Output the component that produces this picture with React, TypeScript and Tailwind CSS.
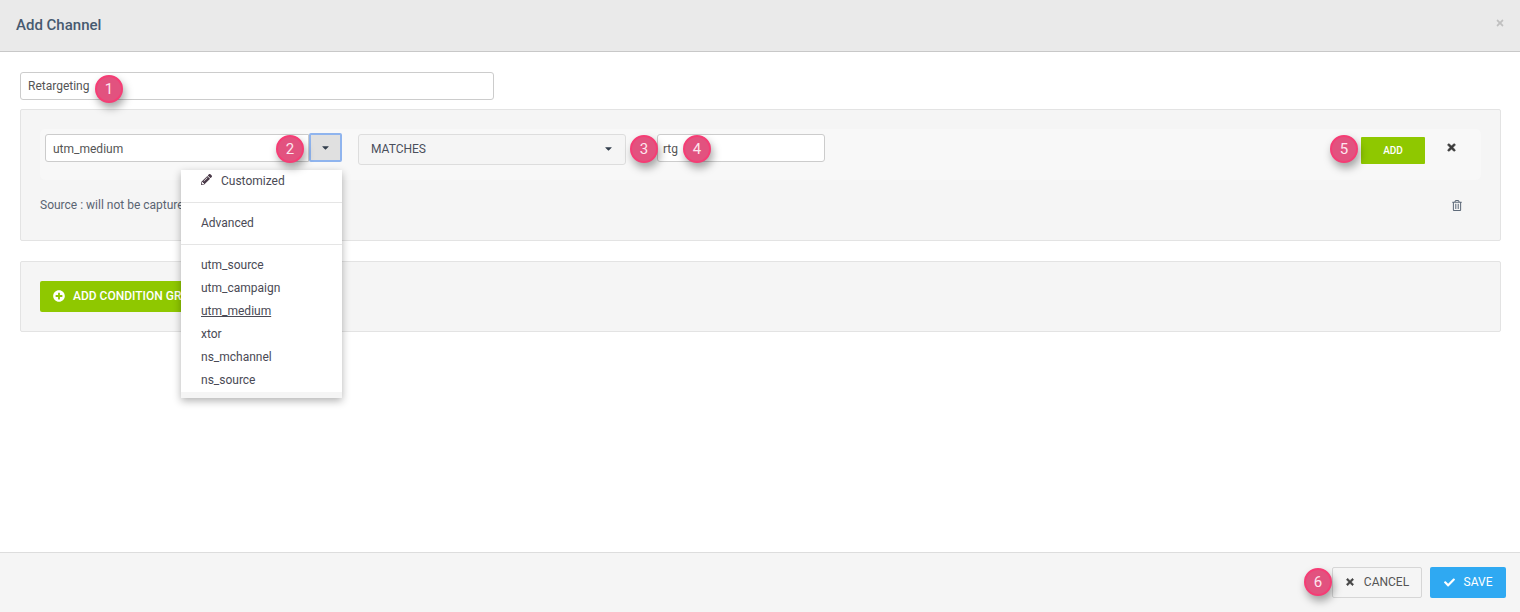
import React from "react";
import { FaCaretDown, FaCheck, FaPencilAlt, FaPlusCircle, FaRegTrashAlt, FaTimes } from "react-icons/fa";

const badges = [
  { n: 1, className: "left-[95px] top-[75px]" },
  { n: 2, className: "left-[276px] top-[135px]" },
  { n: 3, className: "left-[630px] top-[135px]" },
  { n: 4, className: "left-[683px] top-[135px]" },
  { n: 5, className: "left-[1330px] top-[135px]" },
  { n: 6, className: "left-[1304px] top-[568px]" },
];

const sources = ["utm_source", "utm_campaign", "utm_medium", "xtor", "ns_mchannel", "ns_source"];

const Badge: React.FC<{ n: number; className: string }> = ({ n, className }) => (
  <span
    className={`absolute ${className} z-20 flex h-[28px] w-[28px] items-center justify-center rounded-full border-2 border-[#f53d75] bg-[#e2527f] text-[15px] text-[#fde6ee] shadow-[2px_5px_8px_rgba(0,0,0,0.35)]`}>
    {n}
  </span>
);

const Dropdown = () => (
  <div className="absolute left-[181px] top-[170px] z-10 h-[228px] w-[161px] bg-white text-[12px] text-[#4a4a55] shadow-[0_3px_8px_rgba(0,0,0,0.3)]">
    <div className="flex h-[32px] items-start pl-[20px] pt-[2px]">
      <FaPencilAlt className="mt-[2px] h-[11px] w-[11px] text-[#4a3a48]" />
      <span className="ml-[9px]">Customized</span>
    </div>
    <div className="h-px bg-[#e5e5e5]" />
    <div className="flex h-[41px] items-center pb-[2px] pl-[20px]">Advanced</div>
    <div className="h-px bg-[#e5e5e5]" />
    <ul className="pt-[9px]">
      {sources.map((s) => (
        <li key={s} className={s === "utm_medium" ? "h-[23px] pl-[20px] leading-[23px] underline" : "h-[23px] pl-[20px] leading-[23px]"}>
          {s}
        </li>
      ))}
    </ul>
    <div className="absolute bottom-0 left-0 h-[6px] w-full bg-[#f5f5f5]" />
  </div>
);

export default function App() {
  return (
    <div className="relative flex h-[612px] w-full flex-col overflow-hidden bg-white font-['Roboto',sans-serif] text-[12px] text-[#555]">
      <header className="flex h-[52px] items-center justify-between border-b border-[#c8c8c8] bg-[#eaeaea] pl-[16px] pr-[15px]">
        <h1 className="text-[15px] font-medium text-[#475a70]">Add Channel</h1>
        <FaTimes className="mb-[6px] h-[10px] w-[10px] text-[#c0c0c0]" />
      </header>

      <main className="flex-1 pl-[20px] pr-[19px] pt-[20px]">
        <input
          readOnly
          value="Retargeting"
          className="block h-[28px] w-[474px] rounded-[3px] border border-[#ccc] bg-white px-[7px] text-[12px] text-[#555] outline-none"
        />

        <section className="mt-[9px] h-[132px] rounded-[2px] border border-[#e3e3e3] bg-[#f5f5f5] px-[19px] pt-[19px]">
          <div className="flex h-[51px] items-start rounded-[5px] bg-[#f8f8f8] pl-[5px] pt-[5px]">
            <input
              readOnly
              value="utm_medium"
              className="h-[28px] w-[264px] rounded-l-[3px] border border-[#ccc] bg-white pl-[7px] pt-[1px] text-[12px] text-[#555] outline-none"
            />
            <button className="flex h-[29px] w-[33px] -translate-y-px items-center justify-center rounded-[2px] border-2 border-[#8fb4ee] bg-[#e0e0e0]">
              <FaCaretDown className="h-[11px] w-[11px] text-[#333f4d]" />
            </button>
            <div className="ml-[16px] flex h-[31px] w-[268px] items-center justify-between rounded-[3px] border border-[#ddd] bg-[#f5f5f5] pb-[2px] pl-[12px] pr-[11px] text-[12px] text-[#4a4f5c]">
              <span>MATCHES</span>
              <FaCaretDown className="h-[11px] w-[11px] text-[#333f4d]" />
            </div>
            <input
              readOnly
              value="rtg"
              className="ml-[31px] h-[28px] w-[168px] rounded-[3px] border border-[#ccc] bg-white pl-[5px] pt-[1px] text-[12px] text-[#555] outline-none"
            />
            <button className="ml-auto mt-[3px] h-[27px] w-[64px] rounded-[1px] bg-[#8fc800] text-[10px] font-medium text-white">
              ADD
            </button>
            <FaTimes className="ml-[21px] mr-[24px] mt-[8px] h-[11px] w-[11px] text-[#3a3a3a] [stroke-width:30px]" stroke="currentColor" />
          </div>
          <div className="flex items-center justify-between pr-[19px] pt-[16px]">
            <span className="text-[#5a6472]">Source : will not be captured</span>
            <FaRegTrashAlt className="h-[11px] w-[10px] text-[#5f6b7a]" />
          </div>
        </section>

        <section className="mt-[20px] h-[71px] rounded-[2px] border border-[#e3e3e3] bg-[#f5f5f5] px-[19px] pt-[19px]">
          <button className="flex h-[31px] w-[220px] items-center rounded-[2px] bg-[#8fc800] pb-[2px] pl-[13px] text-[12px] font-medium text-white">
            <FaPlusCircle className="h-[12px] w-[12px]" />
            <span className="ml-[8px]">ADD CONDITION GROUP</span>
          </button>
        </section>
      </main>

      <footer className="flex h-[60px] items-start justify-end border-t border-[#ddd] bg-[#f5f5f5] pr-[14px] pt-[14px]">
        <button className="flex h-[31px] w-[90px] items-center justify-center rounded-[2px] border border-[#d6d6d6] bg-[#f5f5f5] pb-[1px] text-[12px] text-[#555]">
          <FaTimes className="mr-[9px] h-[10px] w-[10px] text-[#444] [stroke-width:30px]" stroke="currentColor" />
          CANCEL
        </button>
        <button className="ml-[8px] flex h-[31px] w-[76px] items-center justify-center rounded-[2px] bg-[#2fa9f2] pb-[1px] text-[12px] text-white">
          <FaCheck className="mr-[9px] h-[11px] w-[11px]" />
          SAVE
        </button>
      </footer>

      <Dropdown />
      {badges.map((b) => (
        <Badge key={b.n} n={b.n} className={b.className} />
      ))}
    </div>
  );
}
